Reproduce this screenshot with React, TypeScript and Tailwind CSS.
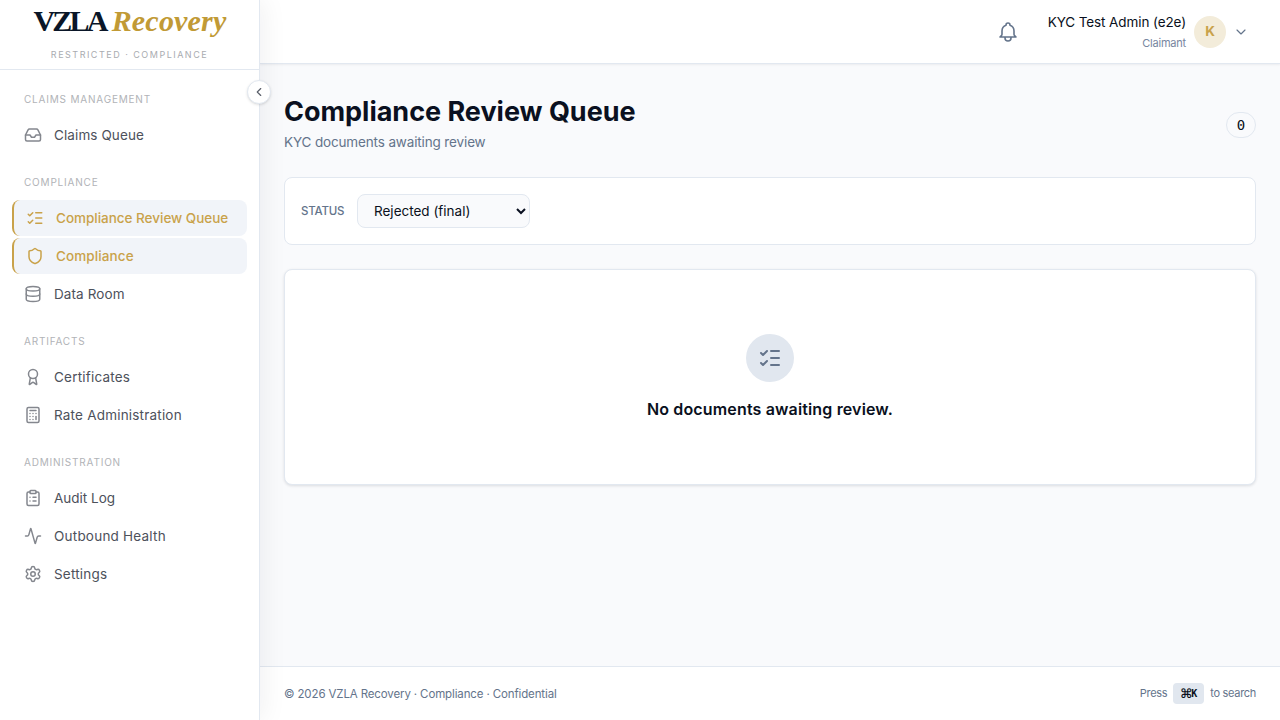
import type { ReactNode } from "react";
import {
  Activity,
  Award,
  Calculator,
  ChevronDown,
  ChevronLeft,
  ClipboardList,
  Database,
  Inbox,
  ListChecks,
  Settings,
  Shield,
  type LucideIcon,
} from "lucide-react";

type NavItem = {
  title: string;
  icon: LucideIcon;
  active?: boolean;
  tracking: string;
};

export default function App() {
  return (
    <div className="flex h-screen overflow-hidden bg-[#f9fafc] font-['Inter','Open_Sans',sans-serif] text-[#0a1020]">
      <Sidebar />
      <div className="flex min-w-0 flex-1 flex-col">
        <Header />
        <main className="flex-1 px-6 pt-[30px]">
          <div className="flex h-[83px] items-start justify-between">
            <div>
              <h1 className="text-[27px] leading-[36px] font-bold tracking-[-0.02px] whitespace-nowrap">
                Compliance Review Queue
              </h1>
              <p className="mt-[2px] text-[13.5px] leading-[20px] tracking-[-0.14px] text-[#64748b]">
                KYC documents awaiting review
              </p>
            </div>
            <span className="mt-[18px] flex h-[26px] w-[30px] items-center justify-center rounded-full border border-[#e2e8f0] font-['DejaVu_Sans_Mono',monospace] text-[14px]">
              0
            </span>
          </div>

          <div className="flex h-[68px] items-center gap-3 rounded-lg border border-[#e2e8f0] bg-white px-4">
            <label
              htmlFor="status"
              className="w-[44px] pt-[2px] text-[11.5px] font-medium tracking-[-0.2px] whitespace-nowrap text-[#64748b]"
            >
              STATUS
            </label>
            <select
              id="status"
              defaultValue="rejected"
              className="h-[34px] w-[173px] rounded-lg border border-[#e2e8f0] bg-[#f9fafc] px-3 text-[13.5px] tracking-[0px]"
            >
              <option value="rejected">Rejected (final)</option>
            </select>
          </div>

          <Empty>No documents awaiting review.</Empty>
        </main>
        <Footer />
      </div>
    </div>
  );
}

function Sidebar() {
  return (
    <aside className="relative z-10 flex w-[260px] shrink-0 flex-col border-r border-[#e2e8f0] bg-white shadow-[4px_0_24px_rgba(10,16,32,0.06)]">
      <div className="flex h-[70px] flex-col items-center border-b border-[#e2e8f0]">
        <div className="mt-[1px] flex h-[40px] items-center gap-[6px] pl-px font-['Liberation_Serif',serif] text-[30px] leading-[40px] font-bold whitespace-nowrap">
          <span className="tracking-[-2.8px] text-[#0a1628]">VZLA</span>
          <span className="tracking-[0.2px] text-[#c19a35] italic">
            Recovery
          </span>
        </div>
        <p className="mt-[7px] text-[9px] leading-[14px] tracking-[1.5px] whitespace-nowrap text-[#a9abb0]">
          RESTRICTED · COMPLIANCE
        </p>
      </div>

      <nav className="grid content-start gap-[22px] px-3 pt-[22px]">
        {sections.map((section) => (
          <div key={section.title}>
            <p className="mb-[10px] px-3 text-[10px] leading-[15px] tracking-[0.8px] text-[#b1b3b7]">
              {section.title}
            </p>
            <div className="grid gap-[2px]">
              {section.items.map((item) => (
                <NavLink key={item.title} {...item} />
              ))}
            </div>
          </div>
        ))}
      </nav>

      <button className="absolute top-[80px] -right-[12px] flex size-6 items-center justify-center rounded-full border border-[#e2e8f0] bg-white text-[#5a5f6a] shadow-sm">
        <ChevronLeft size={14} />
      </button>
    </aside>
  );
}

function NavLink({ title, icon: Icon, active, tracking }: NavItem) {
  return (
    <a
      href="#"
      className={
        active
          ? "flex h-9 items-center gap-3 rounded-lg border-l-2 border-[#c9a24a] bg-[#f1f4f9] px-3 text-[#c9a24a]"
          : "flex h-9 items-center gap-3 rounded-lg px-3 text-[#4d515b]"
      }
    >
      <Icon
        size={18}
        strokeWidth={2}
        className={active ? "shrink-0" : "shrink-0 text-[#84878e]"}
      />
      <span
        className={`text-[13.5px] whitespace-nowrap ${active ? "font-medium" : ""} ${tracking}`}
      >
        {title}
      </span>
    </a>
  );
}

function Header() {
  return (
    <header className="flex h-16 shrink-0 items-center justify-end border-b border-[#e2e8f0] bg-white pr-[31px] shadow-[0_1px_2px_rgba(10,16,32,0.06)]">
      <BellIcon />
      <div className="ml-7 text-right">
        <p className="text-[13.5px] leading-[20px] tracking-[-0.1px] whitespace-nowrap">
          KYC Test Admin (e2e)
        </p>
        <p className="mt-[3px] text-[11px] leading-[16px] tracking-[-0.2px] text-[#7786a0]">
          Claimant
        </p>
      </div>
      <div className="ml-2 flex size-8 items-center justify-center rounded-full bg-[#f3ecda] text-[13.5px] font-bold text-[#c9a24a]">
        K
      </div>
      <ChevronDown
        size={16}
        strokeWidth={1.75}
        className="ml-[7px] text-[#64748b]"
      />
    </header>
  );
}

function BellIcon() {
  return (
    <svg
      viewBox="0 0 24 24"
      fill="none"
      stroke="currentColor"
      strokeWidth={1.6}
      strokeLinecap="round"
      strokeLinejoin="round"
      className="size-6 text-[#64748b]"
    >
      <path d="M15 17h5l-1.405-1.405A2.032 2.032 0 0118 14.158V11a6.002 6.002 0 00-4-5.659V5a2 2 0 10-4 0v.341C7.67 6.165 6 8.388 6 11v3.159c0 .538-.214 1.055-.595 1.436L4 17h5m6 0v1a3 3 0 11-6 0v-1m6 0H9" />
    </svg>
  );
}

function Empty({ children }: { children: ReactNode }) {
  return (
    <div className="mt-6 flex h-[216px] flex-col items-center rounded-lg border border-[#e2e8f0] bg-white pt-16 shadow-[0_1px_3px_rgba(10,16,32,0.12)]">
      <div className="flex size-12 items-center justify-center rounded-full bg-[#e1e7ef] text-[#64748b]">
        <ListChecks size={24} />
      </div>
      <p className="mt-[15px] text-[16px] leading-6 font-semibold tracking-[0.15px] whitespace-nowrap">
        {children}
      </p>
    </div>
  );
}

function Footer() {
  return (
    <footer className="flex h-[54px] shrink-0 items-center justify-between border-t border-[#e2e8f0] bg-white px-6 text-[#64748b]">
      <p className="pt-[2px] text-[11.5px] tracking-[-0.13px] whitespace-nowrap">
        © 2026 VZLA Recovery · Compliance · Confidential
      </p>
      <p className="flex items-center gap-[6px] text-[11px] tracking-[-0.3px] whitespace-nowrap">
        Press
        <kbd className="flex h-[21px] w-[31px] items-center justify-center rounded bg-[#e1e7ef] font-['DejaVu_Sans_Mono',monospace] tracking-normal text-[#0a1020]">
          <span className="font-['DejaVu_Sans',sans-serif] text-[13px] font-bold">
            ⌘
          </span>
          <span className="-ml-px text-[10px] font-bold">K</span>
        </kbd>
        to search
      </p>
    </footer>
  );
}

const sections: { title: string; items: NavItem[] }[] = [
  {
    title: "CLAIMS MANAGEMENT",
    items: [
      { title: "Claims Queue", icon: Inbox, tracking: "tracking-[0.1px]" },
    ],
  },
  {
    title: "COMPLIANCE",
    items: [
      {
        title: "Compliance Review Queue",
        icon: ListChecks,
        active: true,
        tracking: "tracking-[-0.02px]",
      },
      {
        title: "Compliance",
        icon: Shield,
        active: true,
        tracking: "tracking-[0.1px]",
      },
      { title: "Data Room", icon: Database, tracking: "tracking-[0.1px]" },
    ],
  },
  {
    title: "ARTIFACTS",
    items: [
      { title: "Certificates", icon: Award, tracking: "tracking-[0.2px]" },
      {
        title: "Rate Administration",
        icon: Calculator,
        tracking: "tracking-[0.2px]",
      },
    ],
  },
  {
    title: "ADMINISTRATION",
    items: [
      { title: "Audit Log", icon: ClipboardList, tracking: "tracking-[0px]" },
      {
        title: "Outbound Health",
        icon: Activity,
        tracking: "tracking-[0.22px]",
      },
      { title: "Settings", icon: Settings, tracking: "tracking-[0.2px]" },
    ],
  },
];
